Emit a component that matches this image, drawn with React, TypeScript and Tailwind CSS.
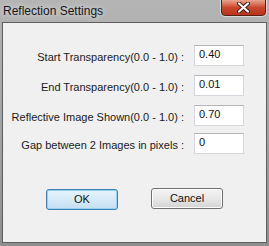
import { useState } from "react";

const rows = [
  { label: "Start Transparency(0.0 - 1.0) :", value: "0.40", mt: "mt-[22px]" },
  { label: "End Transparency(0.0 - 1.0) :", value: "0.01", mt: "mt-[9px]" },
  { label: "Reflective Image Shown(0.0 - 1.0) :", value: "0.70", mt: "mt-[9px]" },
  { label: "Gap between 2 Images in pixels :", value: "0", mt: "mt-[7px]" },
];

function CloseButton() {
  return (
    <div className="mt-[-1px] mr-[3px] flex h-[17px] w-[45px] items-center justify-center rounded-b-[4px] border border-[#5b1f14] bg-gradient-to-b from-[#e8a48e] via-[#c9472c] to-[#b8341c] shadow-[0_0_0_1px_rgba(255,255,255,0.5)]">
      <svg width="13" height="11" viewBox="0 0 13 11">
        <path
          d="M2 1.5 L11 9.5 M11 1.5 L2 9.5"
          stroke="#3a1a14"
          strokeWidth="4"
          strokeLinecap="round"
        />
        <path
          d="M2 1.5 L11 9.5 M11 1.5 L2 9.5"
          stroke="#ffffff"
          strokeWidth="2.2"
          strokeLinecap="round"
        />
      </svg>
    </div>
  );
}

export default function App() {
  const [values, setValues] = useState(rows.map((r) => r.value));

  return (
    <div
      className="flex h-[246px] w-[269px] flex-col overflow-hidden bg-gradient-to-b from-[#b4b4b4] via-[#a4a4a4] to-[#8e8e8e]"
      style={{ fontFamily: '"Liberation Sans", Arial, sans-serif' }}
    >
      <div className="flex h-[22px] items-start justify-between">
        <span className="mt-[3px] ml-[3px] text-[12px] leading-[16px] text-[#15161a] [text-shadow:0_0_6px_rgba(255,255,255,0.9)]">
          Reflection Settings
        </span>
        <CloseButton />
      </div>

      <div className="mx-[2px] flex h-[221px] flex-col border border-[#5e5e5e] bg-[#f0f0f0]">
        {rows.map((r, i) => (
          <div key={r.label} className={`${r.mt} flex items-center`}>
            <div className="w-[182px] whitespace-nowrap pt-[3px] pr-[1px] text-right text-[11px] leading-[14px] text-[#1a1a1a]">
              {r.label}
            </div>
            <input
              value={values[i]}
              onChange={(e) =>
                setValues(values.map((v, j) => (j === i ? e.target.value : v)))
              }
              className="ml-[9px] h-[21px] w-[50px] border border-[#d4d6dc] border-t-[#b4b6bc] bg-white px-[4px] pb-[4px] text-[11px] text-[#111] outline-none"
            />
          </div>
        ))}

        <div className="mt-[34px] flex items-start">
          <button className="ml-[43px] mt-[1px] h-[21px] w-[72px] rounded-[3px] border border-[#3c7fb1] bg-gradient-to-b from-[#e6f3fb] via-[#d6ebf8] to-[#c3dff2] text-[11px] text-[#111] shadow-[inset_0_0_0_1px_#9ad0ef]">
            OK
          </button>
          <button className="ml-[33px] h-[21px] w-[72px] rounded-[3px] border border-[#707070] bg-gradient-to-b from-[#f4f4f4] via-[#e8e8e8] to-[#d3d3d3] text-[11px] text-[#111] shadow-[inset_0_0_0_1px_#fcfcfc]">
            Cancel
          </button>
        </div>
      </div>
    </div>
  );
}
